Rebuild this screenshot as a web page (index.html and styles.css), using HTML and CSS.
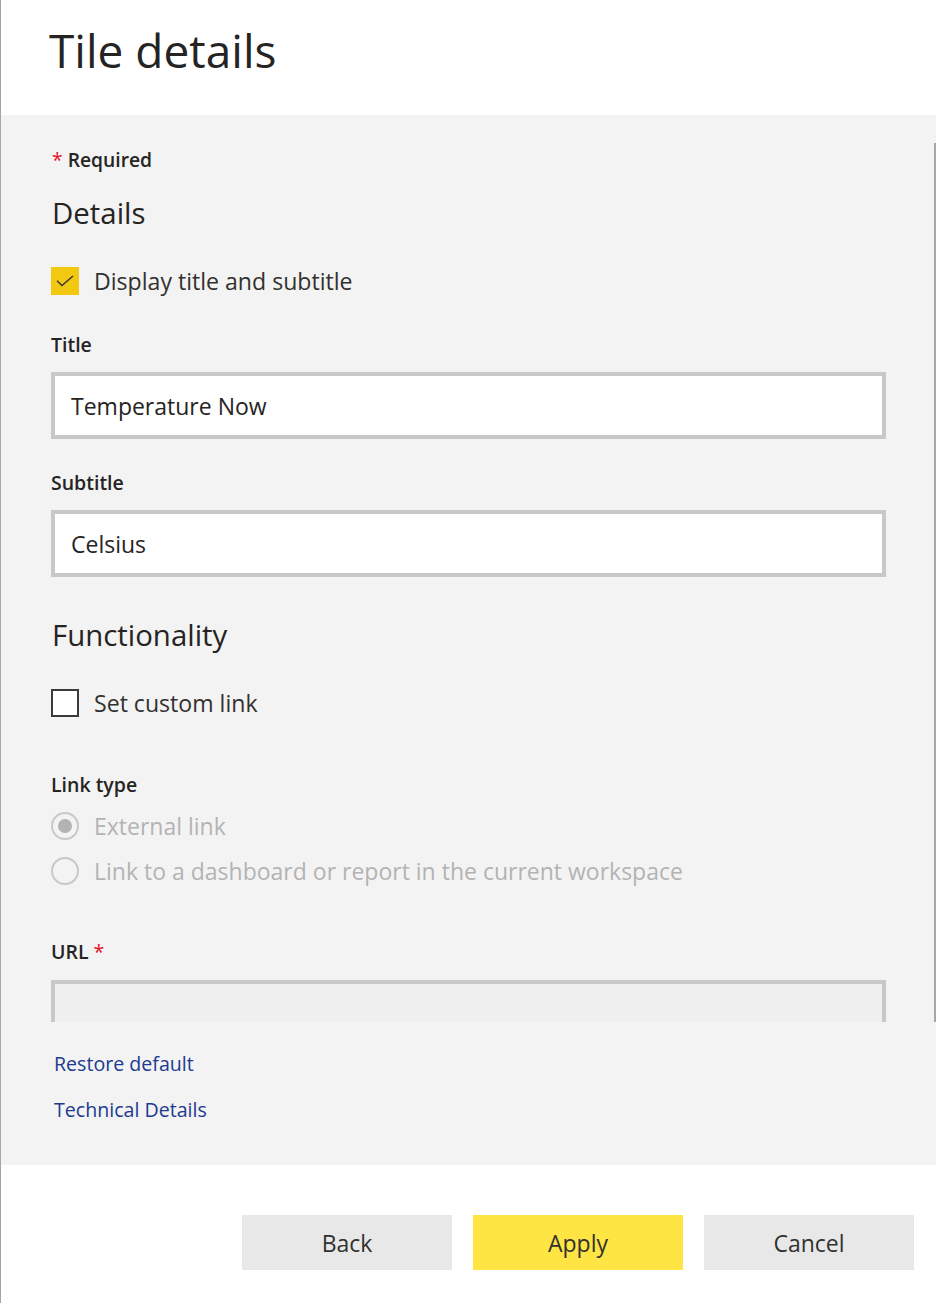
FILE: index.html
```html
<!DOCTYPE html>
<html lang="en">
<head>
<meta charset="utf-8">
<title>Tile details</title>
<link rel="stylesheet" href="styles.css">
</head>
<body>
<div class="dialog">
  <header class="header">
    <h1 class="page-title">Tile details</h1>
  </header>
  <section class="panel">
    <div class="scroll">
      <div class="required"><span class="star">*</span> Required</div>
      <h2 class="section-title details-title">Details</h2>
      <div class="check-row check-row-first">
        <span class="checkbox checked">
          <svg width="18" height="12" viewBox="0 0 18 12"><path d="M1 5.8 L6 10.6 L17 1" fill="none" stroke="#3b3a39" stroke-width="1.5"/></svg>
        </span>
        <span class="check-label">Display title and subtitle</span>
      </div>
      <div class="field-label label-title">Title</div>
      <div class="input">Temperature Now</div>
      <div class="field-label label-sub">Subtitle</div>
      <div class="input">Celsius</div>
      <h2 class="section-title func-title">Functionality</h2>
      <div class="check-row check-row-second">
        <span class="checkbox"></span>
        <span class="check-label">Set custom link</span>
      </div>
      <div class="field-label label-link">Link type</div>
      <div class="radio-row radio-first">
        <span class="radio selected"></span>
        <span class="radio-label">External link</span>
      </div>
      <div class="radio-row radio-second">
        <span class="radio"></span>
        <span class="radio-label">Link to a dashboard or report in the current workspace</span>
      </div>
      <div class="field-label label-url">URL <span class="star">*</span></div>
      <div class="input input-disabled"></div>
      <div class="scrollbar"></div>
    </div>
    <div class="links">
      <a class="link link-first">Restore default</a>
      <a class="link link-second">Technical Details</a>
    </div>
  </section>
  <footer class="footer">
    <button class="btn btn-grey">Back</button>
    <button class="btn btn-yellow">Apply</button>
    <button class="btn btn-grey">Cancel</button>
  </footer>
</div>
</body>
</html>
```

FILE: styles.css
```css
* { box-sizing: border-box; }
html, body { margin: 0; padding: 0; background: #ffffff; }
body {
  font-family: "Open Sans", "Noto Sans", "Liberation Sans", sans-serif;
  color: #323130;
}
.dialog {
  width: 936px;
  height: 1303px;
  border-left: 1px solid #a6a6a6;
  display: flex;
  flex-direction: column;
}
.header {
  height: 115px;
  padding: 18px 0 0 48px;
  background: #ffffff;
}
.page-title {
  margin: 0;
  font-size: 46px;
  font-weight: 400;
  line-height: 64px;
  color: #252423;
}
.panel {
  height: 1050px;
  background: #f3f3f3;
  position: relative;
  display: flex;
  flex-direction: column;
}
.scroll {
  height: 907px;
  overflow: hidden;
  padding: 31px 0 0 50px;
  display: flex;
  flex-direction: column;
  align-items: flex-start;
}
.scrollbar {
  position: absolute;
  right: 0;
  top: 28px;
  width: 2px;
  height: 879px;
  background: #a6a6a6;
}
.required {
  height: 28px;
  line-height: 28px;
  font-size: 19.3px;
  font-weight: 600;
  padding-left: 1px;
  color: #252423;
}
.star { color: #e81123; font-weight: 400; }
.section-title {
  margin: 0;
  height: 40px;
  line-height: 40px;
  font-size: 29.4px;
  font-weight: 400;
  color: #252423;
  padding-left: 1px;
}
.details-title { margin-top: 19px; }
.func-title { margin-top: 38px; }
.check-row, .radio-row {
  height: 28px;
  display: flex;
  align-items: center;
  gap: 15px;
}
.check-row-first { margin-top: 34px; }
.check-row-second { margin-top: 34px; }
.checkbox {
  width: 28px;
  height: 28px;
  border: 2px solid #3b3a39;
  background: #ffffff;
  display: flex;
  align-items: center;
  justify-content: center;
}
.checkbox.checked {
  border: none;
  background: #f2c811;
}
.check-label, .radio-label {
  font-size: 23.1px;
  line-height: 28px;
  color: #323130;
}
.radio-label { color: #b3b3b3; font-size: 23px; }
.radio {
  width: 28px;
  height: 28px;
  border: 2px solid #c8c8c8;
  border-radius: 50%;
  display: flex;
  align-items: center;
  justify-content: center;
}
.radio.selected::after {
  content: "";
  width: 14px;
  height: 14px;
  border-radius: 50%;
  background: #b3b3b3;
}
.radio-first { margin-top: 13px; }
.radio-second { margin-top: 17px; }
.field-label {
  height: 28px;
  line-height: 28px;
  font-size: 19.5px;
  font-weight: 600;
  color: #252423;
}
.label-title { margin-top: 36px; }
.label-sub { margin-top: 30px; }
.label-link { margin-top: 54px; }
.label-url { margin-top: 53px; }
.input {
  margin-top: 13px;
  width: 835px;
  height: 67px;
  flex-shrink: 0;
  border: 4px solid #c8c8c8;
  background: #ffffff;
  padding-left: 16px;
  font-size: 23px;
  line-height: 61px;
  color: #252423;
}
.input-disabled {
  margin-top: 14px;
  background: #f0f0f0;
}
.links {
  padding: 28px 0 0 53px;
  display: flex;
  flex-direction: column;
  align-items: flex-start;
}
.link {
  height: 28px;
  line-height: 28px;
  font-size: 19.6px;
  color: #203a8f;
  cursor: pointer;
}
.link-second { margin-top: 18px; }
.footer {
  height: 138px;
  padding: 50px 22px 0 0;
  display: flex;
  justify-content: flex-end;
  gap: 21px;
  background: #ffffff;
}
.btn {
  width: 210px;
  height: 55px;
  border: none;
  font-family: inherit;
  font-size: 23px;
  color: #323130;
  padding: 0;
}
.btn-grey { background: #e8e8e8; }
.btn-yellow { background: #fee543; }
```
